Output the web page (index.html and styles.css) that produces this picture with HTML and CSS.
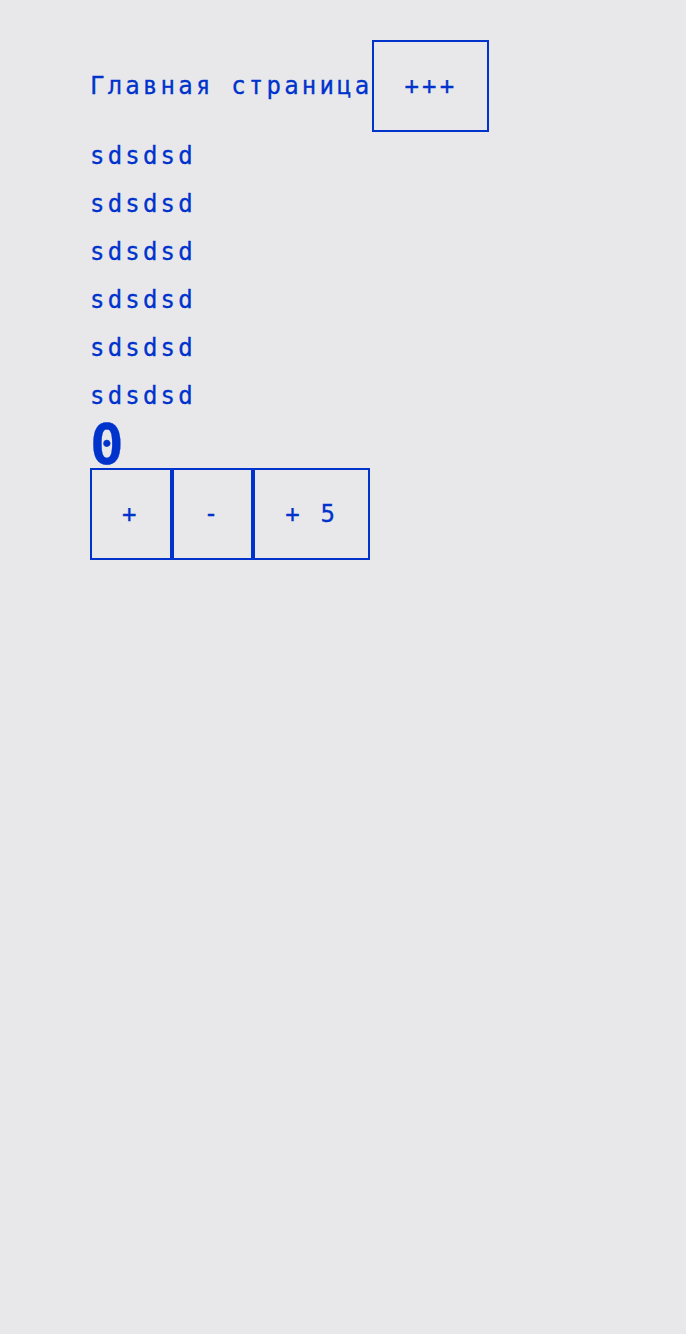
FILE: index.html
```html
<!DOCTYPE html>
<html lang="ru">
<head>
<meta charset="utf-8">
<title>Главная страница</title>
<link rel="stylesheet" href="styles.css">
</head>
<body>
<div class="app">
  <header class="header">
    <span class="title">Главная страница</span>
    <button class="btn">+++</button>
  </header>
  <ul class="list">
    <li>sdsdsd</li>
    <li>sdsdsd</li>
    <li>sdsdsd</li>
    <li>sdsdsd</li>
    <li>sdsdsd</li>
    <li>sdsdsd</li>
  </ul>
  <div class="counter">0</div>
  <div class="controls">
    <button class="btn">+</button>
    <button class="btn">-</button>
    <button class="btn">+ 5</button>
  </div>
</div>
</body>
</html>
```
FILE: styles.css
```css
html, body {
  margin: 0;
  padding: 0;
  background: #e8e8ea;
}
body {
  font-family: Menlo, "DejaVu Sans Mono", monospace;
  font-size: 24px;
  letter-spacing: 3.2px;
  line-height: 48px;
  color: #0033cc;
  -webkit-text-stroke: 0.3px #0033cc;
}
.app {
  padding: 40px 90px;
}
.header {
  display: flex;
  align-items: center;
}
.title {
  white-space: nowrap;
}
.btn {
  font-family: Menlo, "DejaVu Sans Mono", monospace;
  font-size: 24px;
  letter-spacing: 3.2px;
  line-height: normal;
  color: #0033cc;
  -webkit-text-stroke: 0.3px #0033cc;
  background: transparent;
  border: 2px solid #0033cc;
  border-radius: 0;
  padding: 30px;
  margin: 0;
  cursor: pointer;
}
.list {
  list-style: none;
  margin: 0;
  padding: 0;
}
.counter {
  font-size: 56px;
  font-weight: bold;
  line-height: 48px;
  letter-spacing: 0;
  font-variant-numeric: slashed-zero;
}
.controls {
  display: flex;
}
```
